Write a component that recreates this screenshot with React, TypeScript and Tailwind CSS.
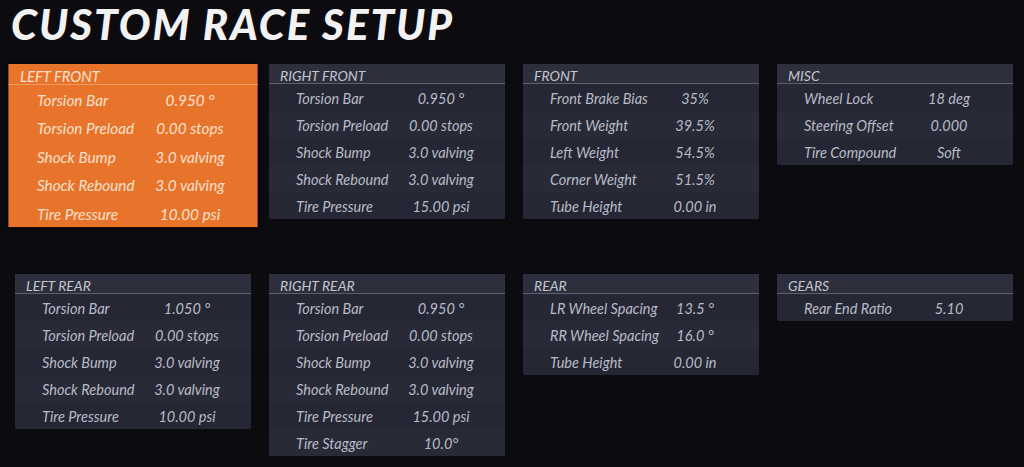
import React from "react";

type Row = [string, string];
type Panel = { title: string; rows: Row[]; active?: boolean };

const row1: Panel[] = [
  {
    title: "LEFT FRONT",
    active: true,
    rows: [
      ["Torsion Bar", "0.950 °"],
      ["Torsion Preload", "0.00 stops"],
      ["Shock Bump", "3.0 valving"],
      ["Shock Rebound", "3.0 valving"],
      ["Tire Pressure", "10.00 psi"],
    ],
  },
  {
    title: "RIGHT FRONT",
    rows: [
      ["Torsion Bar", "0.950 °"],
      ["Torsion Preload", "0.00 stops"],
      ["Shock Bump", "3.0 valving"],
      ["Shock Rebound", "3.0 valving"],
      ["Tire Pressure", "15.00 psi"],
    ],
  },
  {
    title: "FRONT",
    rows: [
      ["Front Brake Bias", "35%"],
      ["Front Weight", "39.5%"],
      ["Left Weight", "54.5%"],
      ["Corner Weight", "51.5%"],
      ["Tube Height", "0.00 in"],
    ],
  },
  {
    title: "MISC",
    rows: [
      ["Wheel Lock", "18 deg"],
      ["Steering Offset", "0.000"],
      ["Tire Compound", "Soft"],
    ],
  },
];

const row2: Panel[] = [
  {
    title: "LEFT REAR",
    rows: [
      ["Torsion Bar", "1.050 °"],
      ["Torsion Preload", "0.00 stops"],
      ["Shock Bump", "3.0 valving"],
      ["Shock Rebound", "3.0 valving"],
      ["Tire Pressure", "10.00 psi"],
    ],
  },
  {
    title: "RIGHT REAR",
    rows: [
      ["Torsion Bar", "0.950 °"],
      ["Torsion Preload", "0.00 stops"],
      ["Shock Bump", "3.0 valving"],
      ["Shock Rebound", "3.0 valving"],
      ["Tire Pressure", "15.00 psi"],
      ["Tire Stagger", "10.0°"],
    ],
  },
  {
    title: "REAR",
    rows: [
      ["LR Wheel Spacing", "13.5 °"],
      ["RR Wheel Spacing", "16.0 °"],
      ["Tube Height", "0.00 in"],
    ],
  },
  {
    title: "GEARS",
    rows: [["Rear End Ratio", "5.10"]],
  },
];

function SetupPanel({ p }: { p: Panel }) {
  const active = !!p.active;
  return (
    <div
      className={
        active
          ? "w-[236px] bg-[#e8742c] origin-top scale-x-[1.056] scale-y-[1.052] shadow-[0_0_6px_rgba(0,0,0,0.6)]"
          : "w-[236px] bg-[#252734] rounded-[2px]"
      }
    >
      <div
        className={
          active
            ? "h-[20px] pl-[11px] pt-[3px] flex items-center text-[14px] text-[#f8e0cc] border-b border-[#f29a60]"
            : "h-[20px] pl-[11px] pt-[3px] flex items-center text-[14px] text-[#c3c5cf] bg-[#2d2f3c] border-b border-[#5d606f]"
        }
      >
        {p.title}
      </div>
      {p.rows.map(([label, value], i) => (
        <div
          key={label}
          className={
            "h-[27px] pt-[3px] flex items-center text-[14.5px] " +
            (active
              ? "text-[#f8e0cc]"
              : i % 2 === 1
              ? "text-[#b9bbc6] bg-[#282a37]"
              : "text-[#b9bbc6]")
          }
        >
          <div className="w-[130px] pl-[27px] whitespace-nowrap">{label}</div>
          <div className="w-[84px] text-center whitespace-nowrap">{value}</div>
        </div>
      ))}
    </div>
  );
}

export default function App() {
  return (
    <div
      className="w-[1024px] h-[467px] bg-[#0b0b10] overflow-hidden italic"
      style={{ fontFamily: "Lato, 'Open Sans', sans-serif" }}
    >
      <div className="pl-[11px] pt-[1px] h-[64px]">
        <h1 className="text-[42px] leading-[46px] font-black italic text-[#f2f2f2] tracking-[2px]">
          CUSTOM RACE SETUP
        </h1>
      </div>
      <div className="pl-[15px] flex flex-col gap-y-[55px]">
        <div className="flex items-start gap-x-[18px]">
          {row1.map((p) => (
            <SetupPanel key={p.title} p={p} />
          ))}
        </div>
        <div className="flex items-start gap-x-[18px]">
          {row2.map((p) => (
            <SetupPanel key={p.title} p={p} />
          ))}
        </div>
      </div>
    </div>
  );
}
